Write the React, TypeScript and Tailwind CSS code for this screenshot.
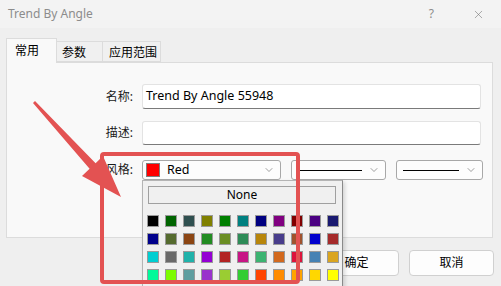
import { ChevronDown, X } from "lucide-react";

const FONT = "font-['Noto_Sans','Noto_Sans_CJK_SC',sans-serif]";

/* ── Palette (KnownColor order of the picker) ─────────────────────────────── */
const COLORS = [
  "#000000","#006400","#2f4f4f","#808000","#008000","#008080","#000080","#800080","#800000","#4b0082","#191970",
  "#00008b","#556b2f","#8b4513","#228b22","#6b8e23","#2e8b57","#b8860b","#483d8b","#a0522d","#0000cd","#a52a2a",
  "#00ced1","#696969","#20b2aa","#9400d3","#b22222","#c71585","#3cb371","#d2691e","#dc143c","#4682b4","#daa520",
  "#00fa9a","#7cfc00","#5f9ea0","#9932cc","#9acd32","#32cd32","#ff4500","#ff8c00","#ffa500","#ffd700","#ffff00",
];

function Combo({ width, children }: { width: string; children: React.ReactNode }) {
  return (
    <div className={`${width} h-[20px] flex items-center border border-[#a8a8a8] rounded-[3px] bg-[#fdfdfd] pl-[3px] pr-[5px]`}>
      <div className="flex-1 flex items-center min-w-0">{children}</div>
      <ChevronDown size={12} strokeWidth={1.2} className="text-[#606060]" />
    </div>
  );
}

function LineSample({ width }: { width: string }) {
  return <div className={`${width} h-px bg-black ml-[3px]`} />;
}

function Row({ label, children, className = "" }: { label: string; children: React.ReactNode; className?: string }) {
  return (
    <div className={`flex items-center ${className}`}>
      <span className="w-[129px] pr-[3px] text-right text-[12px] text-[#1a1a1a]">{label}</span>
      <div className="ml-[6px] flex items-center">{children}</div>
    </div>
  );
}

export default function App() {
  return (
    <div className={`relative w-[501px] h-[286px] overflow-hidden bg-[#efefef] ${FONT}`}>
      {/* Title bar */}
      <div className="h-[28px] flex items-center bg-[#f3f3f3] pl-[8px] pr-[16px]">
        <span className="text-[12px] text-[#8c8c8c] flex-1">Trend By Angle</span>
        <span className="text-[12px] text-[#8c8c8c] mr-[38px]">?</span>
        <X size={13} strokeWidth={1} className="text-[#6a6a6a]" />
      </div>

      {/* Tabs */}
      <div className="flex items-end h-[24px] mt-[10px] ml-[6px]">
        <div className="w-[51px] h-[25px] -mb-px z-10 border border-b-0 border-[#dcdcdc] bg-[#f9f9f9] pl-[8px] pt-[3px] text-[12px] text-black">常用</div>
        <div className="w-[46px] h-[21px] border border-l-0 border-[#dcdcdc] bg-[#f0f0f0] pl-[5px] pt-[2px] text-[12px] text-black">参数</div>
        <div className="w-[58px] h-[21px] border border-l-0 border-[#dcdcdc] bg-[#f0f0f0] pl-[6px] pt-[2px] text-[12px] text-black">应用范围</div>
      </div>

      {/* Panel */}
      <div className="ml-[6px] w-[487px] h-[176px] border border-[#dcdcdc] bg-[#f9f9f9] pt-[21px]">
        <Row label="名称:">
          <div className="w-[339px] h-[25px] flex items-center border border-[#e3e3e3] border-b-[#7a7a7a] rounded-[3px] bg-white pl-[3px] text-[12.5px] text-black">
            Trend By Angle 55948
          </div>
        </Row>
        <Row label="描述:" className="mt-[12px]">
          <div className="w-[339px] h-[24px] border border-[#e3e3e3] border-b-[#7a7a7a] rounded-[3px] bg-white" />
        </Row>
        <Row label="风格:" className="mt-[15px]">
          <Combo width="w-[139px]">
            <div className="w-[14px] h-[14px] border border-[#7f7f7f] bg-[#ff0000]" />
            <span className="ml-[7px] text-[12.5px] text-black">Red</span>
          </Combo>
          <div className="ml-[10px]">
            <Combo width="w-[95px]"><LineSample width="w-[64px]" /></Combo>
          </div>
          <div className="ml-[10px]">
            <Combo width="w-[87px]"><LineSample width="w-[56px]" /></Combo>
          </div>
        </Row>
      </div>

      {/* Buttons */}
      <div className="flex justify-end gap-[10px] mt-[12px] pr-[7px]">
        <div className="w-[85px] h-[26px] flex items-center justify-center border border-[#d0d0d0] rounded-[4px] bg-[#fdfdfd] text-[12px] text-black">确定</div>
        <div className="w-[85px] h-[26px] flex items-center justify-center border border-[#d0d0d0] rounded-[4px] bg-[#fdfdfd] text-[12px] text-black">取消</div>
      </div>

      {/* Colour drop-down (open) */}
      <div className="absolute left-[142px] top-[180px] w-[201px] h-[120px] border border-[#b4b4b4] border-r-[#8a8a8a] bg-[#f0f0f0] pt-[5px] pl-[5px] shadow-[2px_2px_4px_rgba(0,0,0,0.15)]">
        <div className="w-[188px] h-[18px] flex items-center justify-center border border-[#a0a0a0] bg-[#f0f0f0] text-[12px] text-black">None</div>
        <div className="grid grid-cols-[repeat(11,12px)] gap-[6px] mt-[11px] ml-[-1px]">
          {COLORS.map(c => (
            <div key={c} className="w-[12px] h-[12px] border border-[#9a9a9a]" style={{ backgroundColor: c }} />
          ))}
        </div>
      </div>

      {/* Annotation */}
      <svg className="absolute inset-0 pointer-events-none" width="501" height="286" viewBox="0 0 501 286">
        <rect x="102" y="154" width="196" height="128" rx="2" fill="none" stroke="#e35252" strokeWidth="4" />
        <polygon
          points="33,103 89.6,168.7 82,176 121,197 103,156 95.6,163.3 35,101"
          fill="#e35252"
        />
      </svg>
    </div>
  );
}
